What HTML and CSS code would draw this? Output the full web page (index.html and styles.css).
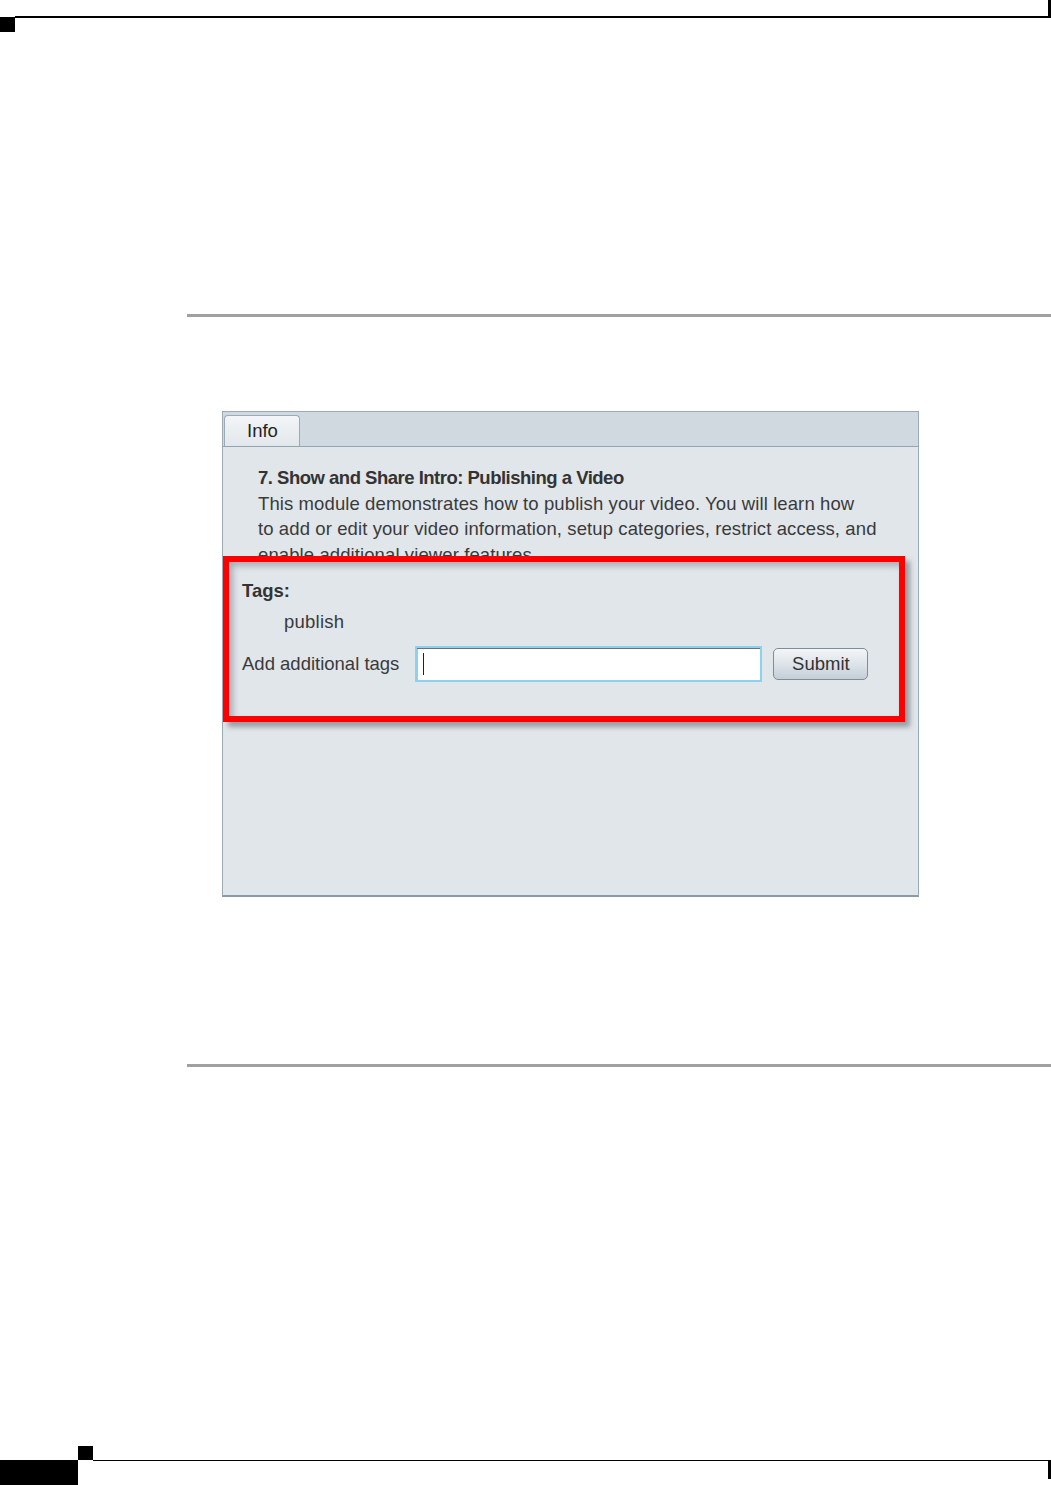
FILE: index.html
```html
<!DOCTYPE html>
<html lang="en">
  <head>
    <meta charset="UTF-8" />
    <meta name="viewport" content="width=device-width, initial-scale=1.0" />
    <title>Publishing a Video - Info</title>
    <link rel="stylesheet" href="styles.css">
  </head>
  <body>
    <header class="page-top">
      <div class="top-mark"></div>
      <div class="top-rule"></div>
    </header>

    <main class="page-body">
      <hr class="section-rule rule-first" />

      <div class="app-window">
        <div class="tab-strip">
          <div class="tab active">Info</div>
        </div>
        <div class="tab-content">
          <div class="module-desc">
            <div class="module-title">7. Show and Share Intro: Publishing a Video</div>
            <p>This module demonstrates how to publish your video. You will learn how<br>
              to add or edit your video information, setup categories, restrict access, and<br>
              enable additional viewer features.</p>
          </div>

          <div class="callout">
            <div class="tags-label">Tags:</div>
            <div class="tag-item">publish</div>
            <div class="tag-form">
              <label class="tag-form-label">Add additional tags</label>
              <div class="tag-input"><span class="caret"></span></div>
              <button type="button" class="submit-btn">Submit</button>
            </div>
          </div>
        </div>
      </div>

      <hr class="section-rule rule-second" />
    </main>

    <footer class="page-foot">
      <div class="foot-mark"></div>
      <div class="foot-block"></div>
      <div class="foot-rule"></div>
    </footer>
  </body>
</html>
```

FILE: styles.css
```css
body {
  margin: 0;
  background: white;
  font-family: "Liberation Sans", Arial, sans-serif;
  color: #333;
}

/* page header marks */
.page-top {
  display: flex;
  align-items: flex-start;
  height: 32px;
}
.top-mark {
  width: 15px;
  height: 15px;
  margin-top: 17px;
  background: #000;
}
.top-rule {
  flex: 1;
  height: 16px;
  border-bottom: 2px solid #000;
  border-right: 3px solid #000;
}

.page-body {
  margin-left: 187px;
}
.section-rule {
  margin: 0;
  height: 3px;
  border: none;
  background: #a0a0a0;
}
.rule-first {
  margin-top: 282px;
}
.rule-second {
  margin-top: 167px;
}

/* screenshot of the app window */
.app-window {
  margin: 94px 0 0 35px;
  width: 697px;
  height: 486px;
  box-sizing: border-box;
  border: 1px solid #9aaab6;
  border-bottom: 2px solid #8a9ba8;
  background: #d1d9e0;
  display: flex;
  flex-direction: column;
}
.tab-strip {
  height: 34px;
  display: flex;
  align-items: flex-end;
  padding-left: 1px;
}
.tab {
  width: 76px;
  height: 31px;
  box-sizing: border-box;
  border: 1px solid #9aabb8;
  border-bottom: none;
  border-radius: 4px 4px 0 0;
  background: linear-gradient(#f3f5f7, #e2e7eb);
  font-size: 18.5px;
  line-height: 30px;
  padding-left: 22px;
  color: #222;
}
.tab-content {
  flex: 1;
  border-top: 1px solid #94a5b2;
  background: #e1e6ea;
  padding-top: 18px;
}

.module-desc {
  height: 91px;
  overflow: hidden;
  padding-left: 35px;
  padding-right: 10px;
  font-size: 18.5px;
  line-height: 25.5px;
  color: #3a3a3a;
  white-space: nowrap;
}
.module-title {
  font-weight: bold;
  letter-spacing: -0.5px;
  color: #333;
}
.module-desc p {
  margin: 0;
  letter-spacing: 0.1px;
}

/* red annotation box */
.callout {
  width: 682px;
  height: 166px;
  box-sizing: border-box;
  border: 6px solid #ff0000;
  padding: 16px 0 0 13px;
  box-shadow: 5px 5px 5px rgba(60, 70, 80, 0.45), inset 4px 4px 6px rgba(60, 70, 80, 0.35);
  font-size: 18.5px;
  line-height: 25.5px;
  color: #3a3a3a;
}
.tags-label {
  font-weight: bold;
  color: #333;
}
.tag-item {
  margin: 5px 0 0 42px;
  letter-spacing: 0.25px;
}
.tag-form {
  display: flex;
  align-items: center;
  margin-top: 12px;
}
.tag-form-label {
  margin-right: 16px;
}
.tag-input {
  width: 347px;
  height: 36px;
  box-sizing: border-box;
  border: 2px solid #8cd2ee;
  background: white;
  box-shadow: inset 0 1px 0 #707070, inset 1px 0 0 #c0c0c0;
  display: flex;
  align-items: center;
  padding-left: 6px;
}
.caret {
  width: 1px;
  height: 22px;
  background: #222;
}
.submit-btn {
  margin-left: 11px;
  width: 95px;
  height: 32px;
  border: 1px solid #7f8d99;
  border-radius: 5px;
  background: linear-gradient(#f4f6f8, #dbe2e8 55%, #c4ced7);
  font-family: "Liberation Sans", Arial, sans-serif;
  font-size: 18.5px;
  color: #333;
  padding: 0;
  cursor: pointer;
}

/* page footer marks */
.page-foot {
  margin-top: 379px;
  display: grid;
  grid-template-columns: 78px 15px 1fr;
  grid-template-rows: 14px 25px;
}
.foot-mark {
  grid-column: 2;
  grid-row: 1;
  background: #000;
}
.foot-block {
  grid-column: 1;
  grid-row: 2;
  background: #000;
}
.foot-rule {
  grid-column: 3;
  grid-row: 2;
  height: 18px;
  border-top: 1px solid #000;
  border-right: 3px solid #000;
}
```
